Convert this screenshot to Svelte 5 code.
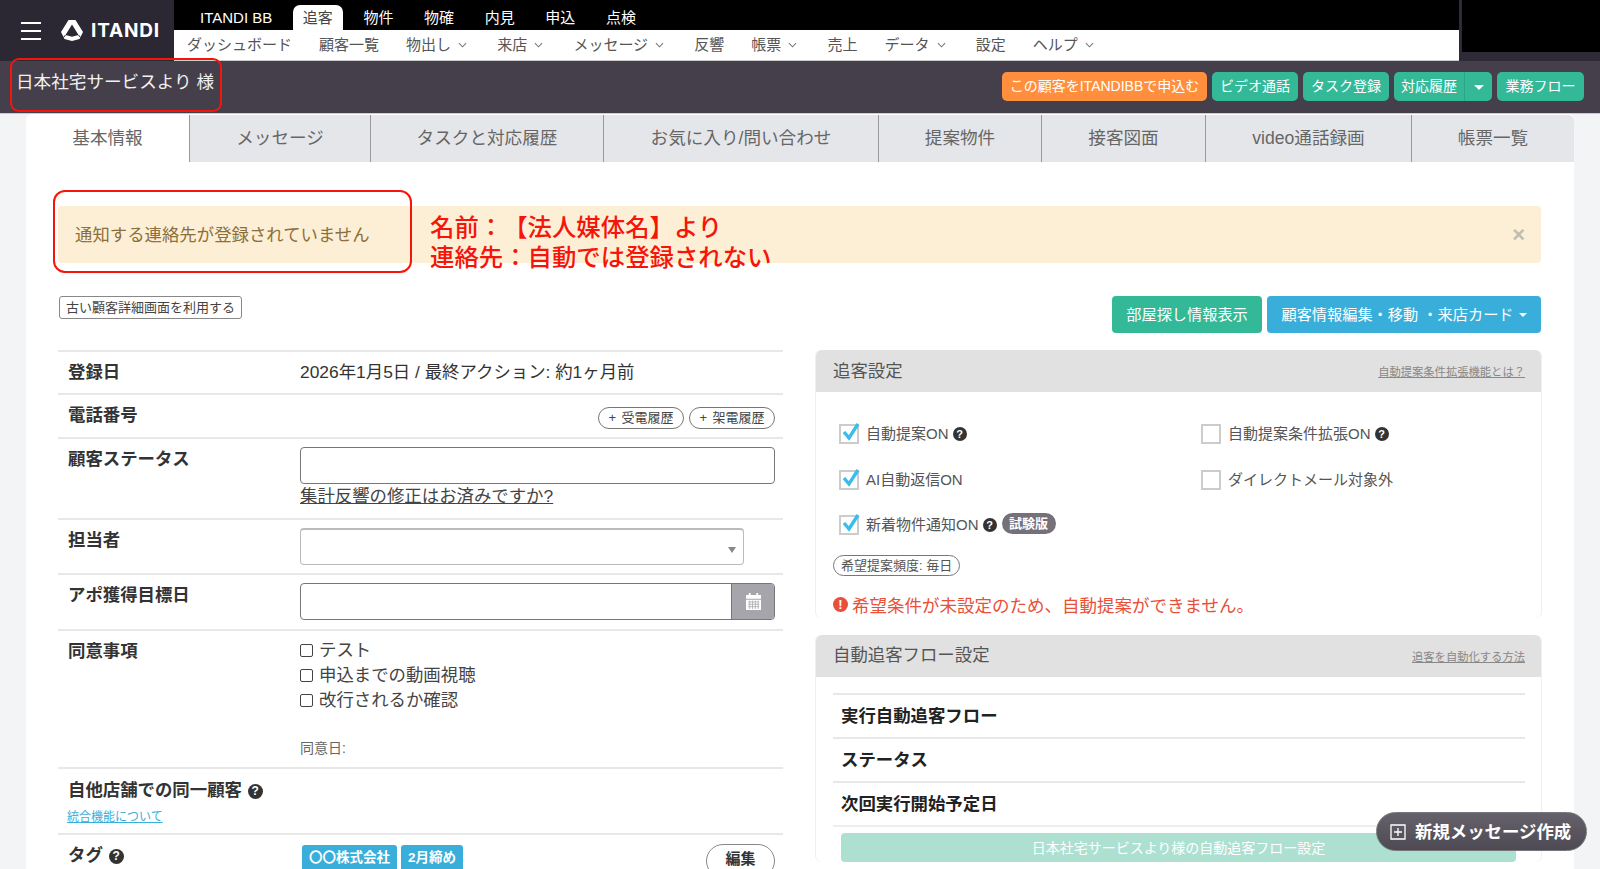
<script>
  const topNav = ['ITANDI BB', '追客', '物件', '物確', '内見', '申込', '点検'];
  const subNav = [
    { label: 'ダッシュボード' },
    { label: '顧客一覧' },
    { label: '物出し', drop: true },
    { label: '来店', drop: true },
    { label: 'メッセージ', drop: true },
    { label: '反響' },
    { label: '帳票', drop: true },
    { label: '売上' },
    { label: 'データ', drop: true },
    { label: '設定' },
    { label: 'ヘルプ', drop: true },
  ];
  const tabs = [
    { label: '基本情報', width: 163 },
    { label: 'メッセージ', width: 181 },
    { label: 'タスクと対応履歴', width: 233 },
    { label: 'お気に入り/問い合わせ', width: 275 },
    { label: '提案物件', width: 163 },
    { label: '接客図面', width: 164 },
    { label: 'video通話録画', width: 206 },
    { label: '帳票一覧', width: 163 },
  ];
  const consents = ['テスト', '申込までの動画視聴', '改行されるか確認'];
  const flowRows = ['実行自動追客フロー', 'ステータス', '次回実行開始予定日'];
</script>

<div class="page">
  <header class="topbar">
    <div class="brand">
      <div class="burger"><i></i><i></i><i></i></div>
      <svg class="logo" viewBox="0 0 22 21" width="22" height="21">
        <path fill="#fff" fill-rule="evenodd" d="M7.500 0h7L22 12l-3.500 7-7.500 2-7.500-2L0 12zM11 4.500L4.500 15l6.500 1.800 6.500-1.800z" />
        <path stroke="#2b2833" stroke-width="1" d="M4.500 15L2.500 17.500M17.500 15l2 2.500" />
      </svg>
      <span class="wordmark">ITANDI</span>
    </div>
    <div class="navs">
      <nav class="nav-top">
        {#each topNav as item}
          <span class:active={item === '追客'}>{item}</span>
        {/each}
      </nav>
      <nav class="nav-sub">
        {#each subNav as item}
          <span class="sub-item" class:drop={item.drop}>
            {item.label}
            {#if item.drop}
              <svg viewBox="0 0 10 6" width="9" height="6"><path d="M1 1l4 4 4-4" fill="none" stroke="#777" stroke-width="1.2" /></svg>
            {/if}
          </span>
        {/each}
      </nav>
    </div>
    <div class="corner"><div class="corner-black"></div></div>
  </header>

  <section class="band">
    <h1>日本社宅サービスより 様</h1>
    <div class="band-actions">
      <button class="hb orange">この顧客をITANDIBBで申込む</button>
      <button class="hb">ビデオ通話</button>
      <button class="hb">タスク登録</button>
      <div class="split">
        <button class="hb main">対応履歴</button>
        <button class="hb caret-btn"><i class="caret white"></i></button>
      </div>
      <button class="hb flow-hb">業務フロー</button>
    </div>
    <div class="mark mark-title"></div>
  </section>

  <main class="card">
    <div class="tabs">
      {#each tabs as tab, i}
        <div class="tab" class:active={i === 0} style="width:{tab.width}px">{tab.label}</div>
      {/each}
    </div>

    <div class="body">
      <div class="alert">
        <span class="alert-text">通知する連絡先が登録されていません</span>
        <span class="close">×</span>
        <div class="mark mark-alert"></div>
        <div class="note">名前：【法人媒体名】より<br />連絡先：自動では登録されない</div>
      </div>

      <div class="toolbar">
        <button class="old">古い顧客詳細画面を利用する</button>
        <div class="toolbar-right">
          <button class="big teal">部屋探し情報表示</button>
          <button class="big blue">顧客情報編集・移動 ・来店カード<i class="caret white small"></i></button>
        </div>
      </div>

      <div class="columns">
        <div class="form">
          <div class="row h43">
            <div class="label">登録日</div>
            <div class="value">2026年1月5日 / 最終アクション: 約1ヶ月前</div>
          </div>
          <div class="row h44">
            <div class="label">電話番号</div>
            <div class="value pills">
              <button class="pill">+ 受電履歴</button>
              <button class="pill">+ 架電履歴</button>
            </div>
          </div>
          <div class="row h81">
            <div class="label">顧客ステータス</div>
            <div class="value">
              <div class="input"></div>
              <a class="fix-link" href="#top">集計反響の修正はお済みですか?</a>
            </div>
          </div>
          <div class="row h55">
            <div class="label">担当者</div>
            <div class="value">
              <div class="input select"><i class="caret grey"></i></div>
            </div>
          </div>
          <div class="row h56">
            <div class="label">アポ獲得目標日</div>
            <div class="value">
              <div class="input date">
                <div class="addon">
                  <svg viewBox="0 0 16 18" width="15" height="17">
                    <path fill="#fff" d="M3 0h2v2h6V0h2v2h3v4H0V2h3zM0 7h16v11H0z" />
                    <path stroke="#a5a5ab" stroke-width="0.8" d="M2 9.500h12M2 12h12M2 14.500h12M4 8v9M7 8v9M10 8v9M13 8v9" />
                  </svg>
                </div>
              </div>
            </div>
          </div>
          <div class="row h138">
            <div class="label">同意事項</div>
            <div class="value consents">
              {#each consents as c}
                <div class="consent"><span class="box"></span>{c}</div>
              {/each}
              <div class="agreed">同意日:</div>
            </div>
          </div>
          <div class="row h66 stacked">
            <div class="label">自他店舗での同一顧客 <span class="help big-help">?</span></div>
            <a class="merge" href="#top">統合機能について</a>
          </div>
          <div class="row last">
            <div class="label">タグ <span class="help big-help">?</span></div>
            <div class="value tags">
              <span class="tag">〇〇株式会社</span>
              <span class="tag">2月締め</span>
              <button class="edit">編集</button>
            </div>
          </div>
        </div>

        <div class="side">
          <div class="panel">
            <div class="panel-head">
              <span class="head-title">追客設定</span>
              <a href="#top">自動提案条件拡張機能とは？</a>
            </div>
            <div class="checks">
              <label class="check"><span class="cb on"><svg viewBox="0 0 22 22" width="22" height="22"><path d="M4 11l5 6 9-14" fill="none" stroke="#38bdec" stroke-width="3.4" /></svg></span>自動提案ON <span class="help">?</span></label>
              <label class="check"><span class="cb"></span>自動提案条件拡張ON <span class="help">?</span></label>
              <label class="check"><span class="cb on"><svg viewBox="0 0 22 22" width="22" height="22"><path d="M4 11l5 6 9-14" fill="none" stroke="#38bdec" stroke-width="3.4" /></svg></span>AI自動返信ON</label>
              <label class="check"><span class="cb"></span>ダイレクトメール対象外</label>
              <label class="check wide"><span class="cb on"><svg viewBox="0 0 22 22" width="22" height="22"><path d="M4 11l5 6 9-14" fill="none" stroke="#38bdec" stroke-width="3.4" /></svg></span>新着物件通知ON <span class="help">?</span><span class="chip">試験版</span></label>
            </div>
            <div class="freq">希望提案頻度: 毎日</div>
            <div class="error"><span class="err-icon">!</span>希望条件が未設定のため、自動提案ができません。</div>
          </div>

          <div class="panel flow">
            <div class="panel-head">
              <span class="head-title">自動追客フロー設定</span>
              <a href="#top">追客を自動化する方法</a>
            </div>
            <div class="flow-list">
              {#each flowRows as r}
                <div class="flow-row">{r}</div>
              {/each}
            </div>
            <button class="flow-btn">日本社宅サービスより様の自動追客フロー設定</button>
          </div>
        </div>
      </div>
    </div>
  </main>

  <button class="fab">
    <svg viewBox="0 0 16 16" width="16" height="16"><path d="M1 1h14v14H1zM8 4v8M4 8h8" fill="none" stroke="#fff" stroke-width="1.300" /></svg>
    <span class="fab-text">新規メッセージ作成</span>
  </button>
</div>

<style>
  :global(body) {
    margin: 0;
    background: #f3f4f6;
  }

  .page {
    position: relative;
    width: 1600px;
    height: 869px;
    overflow: hidden;
    background: #f3f4f6;
    color: #333;
    font-family: "Liberation Sans", "Noto Sans CJK JP", sans-serif;
    font-size: 17.4px;
    text-spacing-trim: space-all;
  }

  button {
    font-family: inherit;
    cursor: pointer;
  }

  /* header */
  .topbar {
    display: flex;
    height: 61px;
    background: #2f2b36;
  }

  .brand {
    width: 174px;
    display: flex;
    align-items: center;
    padding-left: 21px;
    box-sizing: border-box;
    background: #2b2833;
  }

  .burger {
    width: 20px;
    display: flex;
    flex-direction: column;
    gap: 6px;
  }

  .burger i {
    display: block;
    height: 2px;
    background: #fff;
  }

  .logo {
    margin-left: 20px;
  }

  .wordmark {
    margin-left: 8px;
    color: #fff;
    font-family: Inter, sans-serif;
    font-weight: 700;
    font-size: 19px;
    letter-spacing: 0.8px;
  }

  .navs {
    width: 1285px;
    background: #000;
  }

  .nav-top {
    display: flex;
    align-items: flex-end;
    gap: 10.6px;
    height: 30px;
    padding-left: 16px;
    color: #fff;
    font-size: 15px;
    line-height: 25px;
  }

  .nav-top span {
    padding: 0 10px;
    height: 25px;
  }

  .nav-top span.active {
    background: #fff;
    color: #444;
    border-radius: 7px 7px 0 0;
  }

  .nav-sub {
    display: flex;
    align-items: center;
    gap: 27px;
    height: 31px;
    padding-left: 13px;
    background: #fff;
    border-bottom: 1px solid #ccc;
    box-sizing: border-box;
    color: #555;
    font-size: 15px;
    line-height: 30px;
  }

  .sub-item {
    white-space: nowrap;
  }

  .sub-item.drop {
    margin-right: 3px;
  }

  .sub-item svg {
    margin-left: 3px;
    vertical-align: 2px;
  }

  .corner {
    flex: 1;
    padding-left: 3px;
  }

  .corner-black {
    height: 52px;
    background: #000;
  }

  .band {
    position: relative;
    display: flex;
    justify-content: space-between;
    height: 53px;
    background: #453f4b;
    border-bottom: 1px solid #ccc;
    box-sizing: border-box;
  }

  h1 {
    margin: 8px 0 0 16px;
    color: #f0f0f0;
    font-weight: 400;
    font-size: 17.6px;
    line-height: 26px;
  }

  .band-actions {
    display: flex;
    gap: 5px;
    margin: 11px 16px 0 0;
    height: 29px;
  }

  .hb {
    width: 86px;
    height: 29px;
    padding: 0;
    border: none;
    border-radius: 5px;
    background: #33b997;
    color: #fff;
    font-size: 14px;
    line-height: 29px;
    white-space: nowrap;
  }

  .hb.orange {
    background: #ff8f3c;
    width: 205px;
  }

  .hb.flow-hb {
    width: 87px;
  }

  .split {
    display: flex;
  }

  .hb.main {
    border-radius: 5px 0 0 5px;
    border-right: 1px solid #2ca586;
    width: 71px;
  }

  .hb.caret-btn {
    border-radius: 0 5px 5px 0;
    width: 27px;
  }

  .caret {
    display: inline-block;
    border-style: solid;
    border-width: 5px 5px 0;
    border-color: #fff transparent transparent;
    vertical-align: middle;
  }

  .caret.small {
    margin-left: 5px;
    border-width: 4px 4px 0;
  }

  .caret.grey {
    border-width: 6px 4px 0;
    border-top-color: #888;
  }

  /* red annotations */
  .mark {
    position: absolute;
    border: 2px solid #f5150a;
    box-sizing: border-box;
    pointer-events: none;
  }

  .mark-title {
    left: 10px;
    top: -3px;
    width: 212px;
    height: 54px;
    border-radius: 9px;
  }

  .mark-alert {
    left: -5px;
    top: -16px;
    width: 359px;
    height: 83px;
    border-radius: 12px;
  }

  .note {
    position: absolute;
    left: 372px;
    top: 7px;
    color: #f5150a;
    font-size: 24.400px;
    line-height: 30px;
    font-weight: 500;
    white-space: nowrap;
  }

  /* card */
  .card {
    width: 1548px;
    height: 755px;
    margin-left: 26px;
    background: #fff;
    border-radius: 6px 6px 0 0;
  }

  .tabs {
    display: flex;
    padding-top: 1px;
    font-size: 17.6px;
    color: #666;
  }

  .tab {
    height: 47px;
    line-height: 47px;
    text-align: center;
    background: #e5e6ea;
    border-left: 1px solid #999;
    box-sizing: border-box;
  }

  .tab.active {
    background: #fff;
    border-left: none;
    border-radius: 6px 0 0 0;
  }

  .tab:last-child {
    border-radius: 0 6px 0 0;
  }

  .body {
    padding: 44px 33px 0 32px;
  }

  .alert {
    position: relative;
    display: flex;
    justify-content: space-between;
    align-items: center;
    height: 57px;
    padding: 0 16px 0 17px;
    background: #fdefd5;
    border-radius: 4px;
    color: #8c6f3c;
    font-size: 17.4px;
  }

  .alert-text {
    margin-top: -3px;
  }

  .close {
    color: #c2bcaf;
    font-size: 22px;
    font-weight: 700;
  }

  .toolbar {
    display: flex;
    justify-content: space-between;
    align-items: flex-start;
    height: 37px;
    margin-top: 33px;
    margin-bottom: 17px;
  }

  .old {
    margin: 0 0 0 1px;
    padding: 0 0 2px;
    width: 183px;
    height: 23px;
    border: 1px solid #888;
    border-radius: 3px;
    background: #fff;
    color: #444;
    font-size: 13px;
    white-space: nowrap;
  }

  .toolbar-right {
    display: flex;
    gap: 5px;
  }

  .big {
    height: 37px;
    border: none;
    border-radius: 4px;
    color: #fff;
    font-size: 15.2px;
    padding: 0 0 4px;
  }

  .big.teal {
    width: 150px;
    background: #33b997;
  }

  .big.blue {
    width: 274px;
    background: #3aaedb;
  }

  .columns {
    display: grid;
    grid-template-columns: 725px 725px;
    gap: 33px;
    align-items: start;
  }

  /* left form */
  .row {
    display: flex;
    border-top: 2px solid #e8e8e8;
    box-sizing: border-box;
    padding-top: 8px;
    line-height: 25px;
  }

  .h43 { height: 43px; }
  .h44 { height: 44px; }
  .h81 { height: 81px; }
  .h55 { height: 55px; }
  .h56 { height: 56px; }
  .h138 { height: 138px; }
  .h66 { height: 66px; }
  .last { height: 60px; }

  .stacked {
    flex-direction: column;
    padding-top: 9px;
  }

  .label {
    width: 242px;
    flex: none;
    padding-left: 10px;
    box-sizing: border-box;
    font-weight: 700;
    white-space: nowrap;
  }

  .value {
    flex: 1;
    padding-right: 8px;
  }

  .pills {
    display: flex;
    justify-content: flex-end;
    gap: 5px;
    padding-top: 4px;
  }

  .pill {
    width: 86px;
    height: 22px;
    padding: 0;
    border: 1px solid #777;
    border-radius: 11px;
    background: #fff;
    color: #444;
    font-size: 13px;
    line-height: 20px;
    word-spacing: 2px;
  }

  .input {
    position: relative;
    height: 37px;
    border: 1px solid #777;
    border-radius: 4px;
    box-sizing: border-box;
    background: #fff;
  }

  .fix-link {
    display: block;
    margin-top: 0;
    line-height: 25px;
    color: #444;
  }

  .select {
    width: 444px;
    border-color: #bbb;
    border-top-width: 2px;
  }

  .select .caret {
    position: absolute;
    right: 7px;
    top: 17px;
  }

  .date {
    overflow: hidden;
  }

  .addon {
    position: absolute;
    right: 0;
    top: 0;
    bottom: 0;
    width: 42px;
    display: flex;
    align-items: center;
    justify-content: center;
    background: #a5a5ab;
    border-left: 1px solid #777;
  }

  .consents {
    margin-top: -1px;
  }

  .consent {
    display: flex;
    align-items: center;
    height: 25px;
    color: #444;
  }

  .box {
    width: 11px;
    height: 11px;
    margin-right: 6px;
    border: 1px solid #444;
    border-radius: 2px;
  }

  .agreed {
    margin-top: 23px;
    font-size: 14px;
    color: #666;
    line-height: 24px;
  }

  .help {
    display: inline-block;
    width: 14px;
    height: 14px;
    border-radius: 50%;
    background: #333;
    color: #fff;
    font-size: 11px;
    font-weight: 700;
    line-height: 14px;
    text-align: center;
    vertical-align: 1px;
  }

  .big-help {
    width: 15px;
    height: 15px;
    font-size: 12px;
    line-height: 15px;
    margin-left: 1px;
  }

  .merge {
    margin: 6px 0 0 9px;
    font-size: 12px;
    line-height: 16px;
    color: #3aaedb;
  }

  .tags {
    display: flex;
    gap: 4px;
    padding-top: 2px;
    padding-left: 2px;
  }

  .tag {
    height: 26px;
    padding: 0 7px;
    background: #3aaedb;
    border-radius: 3px;
    color: #fff;
    font-size: 13.5px;
    font-weight: 700;
    line-height: 26px;
  }

  .edit {
    width: 69px;
    height: 34px;
    margin-left: auto;
    margin-top: -1px;
    padding: 0 0 8px;
    border: 1px solid #888;
    border-radius: 17px;
    background: #fff;
    color: #333;
    font-size: 15px;
    font-weight: 700;
  }

  /* right panels */
  .panel {
    border-radius: 6px;
    background: #fff;
    box-shadow: -1px 0 0 #f0f0f0, 1px 0 0 #f0f0f0;
  }

  .panel-head {
    display: flex;
    justify-content: space-between;
    align-items: center;
    height: 42px;
    padding: 0 16px 0 17px;
    background: #e1e1e1;
    border-radius: 6px 6px 0 0;
    color: #555;
    font-size: 17.4px;
  }

  .head-title {
    margin-top: -4px;
  }

  .panel-head a {
    color: #888;
    font-size: 11.3px;
  }

  .checks {
    display: grid;
    grid-template-columns: 362px 1fr;
    grid-auto-rows: 45.500px;
    padding: 32px 0 0 23px;
  }

  .check {
    display: flex;
    align-items: flex-start;
    gap: 0;
    font-size: 15px;
    line-height: 20px;
    color: #555;
    white-space: nowrap;
  }

  .check .help {
    margin: 3px 0 0 4px;
  }

  .wide {
    grid-column: 1 / 3;
  }

  .cb {
    position: relative;
    width: 20px;
    height: 20px;
    margin-right: 7px;
    border: 2px solid #ccc;
    box-sizing: border-box;
    flex: none;
  }

  .cb svg {
    position: absolute;
    left: -1px;
    top: -5px;
  }

  .chip {
    margin: -2px 0 0 5px;
    width: 54px;
    height: 21px;
    border-radius: 11px;
    background: #757079;
    color: #fff;
    font-size: 13px;
    font-weight: 700;
    line-height: 21px;
    text-align: center;
  }

  .freq {
    width: fit-content;
    margin: -6px 0 0 17px;
    padding: 0 7px;
    height: 21px;
    border: 1px solid #777;
    border-radius: 11px;
    box-sizing: border-box;
    color: #555;
    font-size: 13px;
    line-height: 19px;
  }

  .error {
    display: flex;
    align-items: center;
    height: 26px;
    margin: 16px 0 0 17px;
    color: #e9503a;
    font-size: 17.5px;
    white-space: nowrap;
  }

  .err-icon {
    width: 15px;
    height: 15px;
    margin-right: 4px;
    border-radius: 50%;
    background: #e9503a;
    color: #fff;
    font-size: 13px;
    font-weight: 700;
    line-height: 15px;
    text-align: center;
  }

  .flow {
    margin-top: 17px;
  }

  .flow-list {
    margin: 16px 16px 0 17px;
  }

  .flow-row {
    height: 44px;
    padding-left: 8px;
    border-top: 2px solid #e8e8e8;
    box-sizing: border-box;
    color: #222;
    font-size: 17.4px;
    font-weight: 700;
    line-height: 42px;
  }

  .flow-row:last-child {
    border-bottom: 2px solid #eee;
    height: 46px;
  }

  .flow-btn {
    display: block;
    width: 675px;
    height: 29px;
    margin: 6px 0 0 25px;
    padding: 0;
    border: none;
    border-radius: 4px;
    background: #aee0d1;
    color: #fff;
    font-size: 14px;
  }

  .fab {
    position: absolute;
    left: 1376px;
    top: 812px;
    display: flex;
    align-items: center;
    gap: 9px;
    width: 211px;
    height: 39px;
    padding: 0 0 0 13px;
    border: 1px solid #777;
    border-radius: 20px;
    background: linear-gradient(#66626c, #4e4a54);
    color: #fff;
    font-size: 17.4px;
    font-weight: 700;
    white-space: nowrap;
  }

  .fab-text {
    margin-top: -3px;
  }
</style>
